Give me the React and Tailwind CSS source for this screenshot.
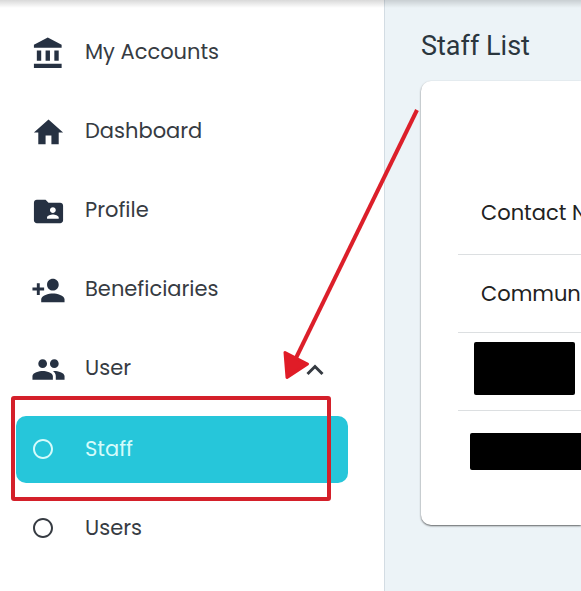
import {
  MdFolderShared,
  MdHome,
  MdPeople,
  MdPersonAdd,
  MdRadioButtonUnchecked,
} from "react-icons/md";
import clsx from "clsx";

function BankIcon({ size, className }) {
  return (
    <svg
      width={size}
      height={size}
      viewBox="0 0 24 24"
      fill="currentColor"
      className={className}
      aria-hidden="true"
    >
      <path d="M4 10v7h3v-7H4zm6 0v7h3v-7h-3zM2 22h19v-3H2v3zm14-12v7h3v-7h-3zm-4.500-9L2 6v2h19V6l-9.500-5z" />
    </svg>
  );
}

const MAIN_ITEMS = [
  { label: "My Accounts", icon: BankIcon },
  { label: "Dashboard", icon: MdHome },
  { label: "Profile", icon: MdFolderShared },
  { label: "Beneficiaries", icon: MdPersonAdd },
];

const USER_ITEMS = [{ label: "Staff", active: true }, { label: "Users" }];

function Sidebar() {
  return (
    <aside className="w-[385px] shrink-0 border-r border-[#d3dce3] bg-white pt-[18px] pr-9 pl-4 text-[21px] text-[#363b42]">
      <nav>
        <ul className="flex flex-col gap-3">
          {MAIN_ITEMS.map(({ label, icon: Icon }) => (
            <li key={label}>
              <a href="#" className="flex h-[67px] items-center pl-[15px]">
                <Icon size={35} className="mt-1 text-[#263142]" />
                <span className="ml-[19px]">{label}</span>
              </a>
            </li>
          ))}
          <li>
            <button
              type="button"
              aria-expanded="true"
              className="flex h-[67px] w-full items-center pr-6 pl-[15px]"
            >
              <MdPeople size={35} className="mt-1 text-[#263142]" />
              <span className="ml-[19px]">User</span>
              <svg
                width="18"
                height="12"
                viewBox="0 0 18 12"
                fill="none"
                stroke="currentColor"
                strokeWidth="3"
                className="mt-1 ml-auto"
                aria-hidden="true"
              >
                <path d="M1.500 10L9 2.500L16.500 10" />
              </svg>
            </button>

            {/* User submenu */}
            <ul className="mt-[15px] flex flex-col gap-3">
              {USER_ITEMS.map(({ label, active }) => (
                <li key={label}>
                  <a
                    href="#"
                    className={clsx(
                      "flex h-[67px] items-center rounded-[10px] pb-0.5 pl-[15px]",
                      active && "bg-[#26c6da] text-[#d5fbfb]"
                    )}
                  >
                    <MdRadioButtonUnchecked size={24} />
                    <span className="ml-[30px]">{label}</span>
                  </a>
                </li>
              ))}
            </ul>
          </li>
        </ul>
      </nav>
    </aside>
  );
}

function StaffCard() {
  return (
    <section className="mt-[17px] h-[444px] overflow-hidden rounded-l-[10px] bg-white pt-[91px] pl-[37px] shadow-[0_1px_2px_rgba(0,0,0,0.6)]">
      <table className="w-full text-left text-[21px] whitespace-nowrap text-[#222222]">
        <thead>
          <tr className="h-[82px] border-b border-[#dcdfe1]">
            <th className="pl-[23px] font-normal">Contact Name</th>
          </tr>
        </thead>
        <tbody>
          <tr className="h-[78px] border-b border-[#dcdfe1]">
            <td className="pt-0.5 pl-[23px]">Communication</td>
          </tr>
          <tr className="h-[78px] border-b border-[#dcdfe1]">
            <td className="pl-4">
              <div className="mb-1.5 h-[53px] w-[101px] rounded-xs bg-black" />
            </td>
          </tr>
          <tr className="h-[82px]">
            <td className="pl-3">
              <div className="h-[37px] w-full rounded-xs bg-black" />
            </td>
          </tr>
        </tbody>
      </table>
    </section>
  );
}

// Red highlight box and pointer drawn over the menu
function Callout() {
  return (
    <svg
      className="pointer-events-none absolute top-0 left-0"
      width="430"
      height="520"
      viewBox="0 0 430 520"
      fill="none"
      aria-hidden="true"
    >
      <rect x="13" y="398" width="316" height="101" rx="1" stroke="#d4202a" strokeWidth="4" />
      <path d="M417 110L296 358" stroke="#dc1f2a" strokeWidth="4" />
      <path
        d="M285 352.500L307.500 364L287 377.500Z"
        fill="#e01c27"
        stroke="#e01c27"
        strokeWidth="3"
        strokeLinejoin="round"
      />
    </svg>
  );
}

export default function App() {
  return (
    <div className="relative flex min-h-screen overflow-hidden bg-[#ecf3f7] font-['Poppins','Inter',sans-serif]">
      <Sidebar />
      <main className="min-w-0 flex-1 pt-7 pl-9">
        <h1 className="font-['Roboto',sans-serif] text-[27px] leading-9 text-[#2b363e]">
          Staff List
        </h1>
        <StaffCard />
      </main>
      <div className="absolute inset-x-0 top-0 h-2 bg-linear-to-b from-black/15 to-transparent" />
      <Callout />
    </div>
  );
}
